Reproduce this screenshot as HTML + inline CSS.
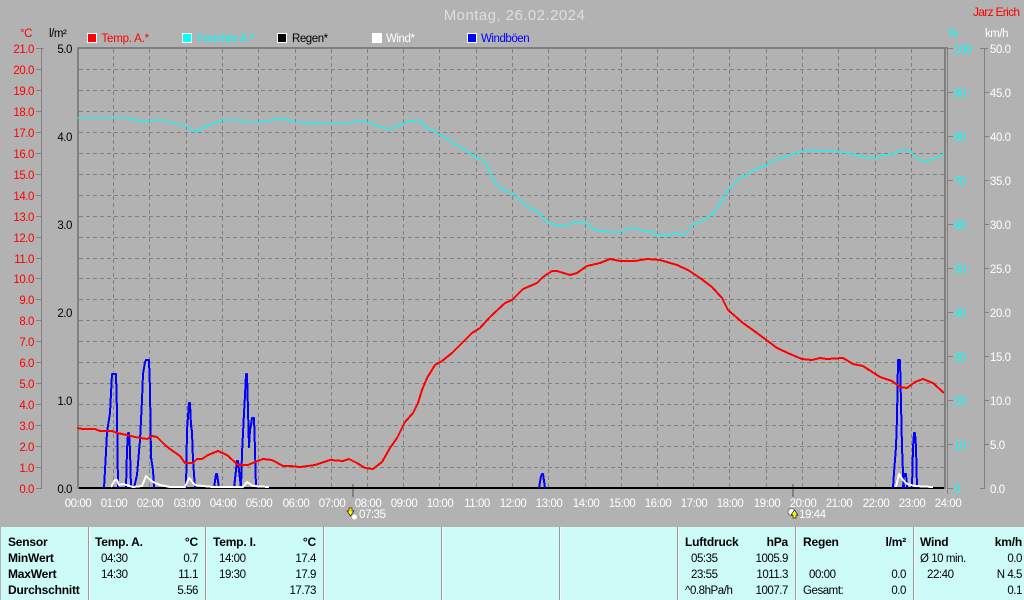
<!DOCTYPE html>
<html lang="de">
<head>
<meta charset="utf-8">
<title>Montag, 26.02.2024</title>
<style>
html,body{margin:0;padding:0;background:#b2b2b2;width:1024px;height:600px;overflow:hidden}
svg{display:block;position:absolute;left:0;top:0}
text{font-family:"Liberation Sans",sans-serif;font-size:11.5px;letter-spacing:-.45px}
.r{fill:#f00}.k{fill:#000}.c{fill:#0ff}.w{fill:#fff}
.e{text-anchor:end}.m{text-anchor:middle}
.b{font-weight:bold;font-size:12px;letter-spacing:-.2px}
.g{stroke:#808080;stroke-width:1;stroke-dasharray:4 3;fill:none}
.l{fill:none;stroke-linejoin:round}
</style>
</head>
<body>
<svg width="1024" height="600" viewBox="0 0 1024 600" xmlns="http://www.w3.org/2000/svg">
<rect width="1024" height="600" fill="#b2b2b2"/>

<text x="514.5" y="20" class="m" style="font-size:15px;letter-spacing:.45px;fill:#dedede">Montag, 26.02.2024</text>
<text x="973" y="16" class="r" style="font-size:12px;letter-spacing:-.7px">Jarz Erich</text>

<text x="20" y="37" class="r">°C</text>
<text x="49" y="37" class="k">l/m²</text>
<text x="948" y="37" class="c">%</text>
<text x="985" y="37" class="w">km/h</text>

<!-- legend -->
<g stroke="#fff" stroke-width="1" shape-rendering="crispEdges">
<rect x="87.5" y="33.5" width="9" height="9" fill="#f00"/>
<rect x="182.5" y="33.5" width="9" height="9" fill="#0ff"/>
<rect x="277.5" y="33.5" width="9" height="9" fill="#000"/>
<rect x="372.5" y="33.5" width="9" height="9" fill="#fff"/>
<rect x="467.5" y="33.5" width="9" height="9" fill="#00f"/>
</g>
<text x="101.5" y="42" class="r" style="letter-spacing:-.2px">Temp. A.*</text>
<text x="197" y="42" class="c" style="letter-spacing:-.2px">Feuchte A.*</text>
<text x="292" y="42" class="k">Regen*</text>
<text x="386" y="42" class="w">Wind*</text>
<text x="481" y="42" style="fill:#00f">Windböen</text>

<!-- grid -->
<g class="g" shape-rendering="crispEdges">
<path d="M79 69.5H944M79 90.5H944M79 111.5H944M79 132.5H944M79 153.5H944M79 174.5H944M79 195.5H944M79 216.5H944M79 237.5H944M79 258.5H944M79 278.5H944M79 299.5H944M79 320.5H944M79 341.5H944M79 362.5H944M79 383.5H944M79 404.5H944M79 425.5H944M79 446.5H944M79 467.5H944"/>
<path d="M113.5 49V488M149.5 49V488M186.5 49V488M222.5 49V488M258.5 49V488M295.5 49V488M331.5 49V488M367.5 49V488M403.5 49V488M439.5 49V488M476.5 49V488M512.5 49V488M548.5 49V488M585.5 49V488M621.5 49V488M657.5 49V488M693.5 49V488M729.5 49V488M766.5 49V488M802.5 49V488M838.5 49V488M875.5 49V488M911.5 49V488"/>
</g>

<!-- axes -->
<g fill="#808080" shape-rendering="crispEdges">
<rect x="77" y="47" width="870" height="2"/>
<rect x="77" y="47" width="2" height="442"/>
<rect x="944" y="47" width="2" height="442"/>
<rect x="947" y="47" width="1" height="447"/>
<rect x="41" y="48" width="1" height="441"/>
<rect x="984" y="48" width="1" height="441"/>
<rect x="36" y="48" width="8" height="1"/>
<rect x="980" y="48" width="8" height="1"/>
<rect x="980" y="488" width="5" height="1"/>
<rect x="352" y="484" width="2" height="13"/>
<rect x="792" y="484" width="2" height="13"/>
</g>
<path stroke="#808080" fill="none" shape-rendering="crispEdges" d="M36 69.5h5M36 90.5h5M36 111.5h5M36 132.5h5M36 153.5h5M36 174.5h5M36 195.5h5M36 216.5h5M36 237.5h5M36 258.5h5M36 278.5h5M36 299.5h5M36 320.5h5M36 341.5h5M36 362.5h5M36 383.5h5M36 404.5h5M36 425.5h5M36 446.5h5M36 467.5h5M36 488.5h5"/>
<path stroke="#808080" fill="none" shape-rendering="crispEdges" d="M948 48.5h5M948 92.5h5M948 136.5h5M948 180.5h5M948 224.5h5M948 268.5h5M948 312.5h5M948 356.5h5M948 400.5h5M948 444.5h5M948 488.5h5"/>
<path stroke="#808080" fill="none" shape-rendering="crispEdges" d="M985 92.5h4M985 136.5h4M985 180.5h4M985 224.5h4M985 268.5h4M985 312.5h4M985 356.5h4M985 400.5h4M985 444.5h4"/>

<!-- temp axis -->
<g class="r">
<text x="34" y="53" class="e">21.0</text><text x="34" y="74" class="e">20.0</text><text x="34" y="95" class="e">19.0</text><text x="34" y="116" class="e">18.0</text><text x="34" y="137" class="e">17.0</text><text x="34" y="158" class="e">16.0</text><text x="34" y="179" class="e">15.0</text><text x="34" y="200" class="e">14.0</text><text x="34" y="221" class="e">13.0</text><text x="34" y="242" class="e">12.0</text><text x="34" y="263" class="e">11.0</text><text x="34" y="283" class="e">10.0</text><text x="34" y="304" class="e">9.0</text><text x="34" y="325" class="e">8.0</text><text x="34" y="346" class="e">7.0</text><text x="34" y="367" class="e">6.0</text><text x="34" y="388" class="e">5.0</text><text x="34" y="409" class="e">4.0</text><text x="34" y="430" class="e">3.0</text><text x="34" y="451" class="e">2.0</text><text x="34" y="472" class="e">1.0</text><text x="34" y="493" class="e">0.0</text>
</g>
<!-- rain axis -->
<g class="k">
<text x="72" y="53" class="e">5.0</text><text x="72" y="141" class="e">4.0</text><text x="72" y="229" class="e">3.0</text><text x="72" y="317" class="e">2.0</text><text x="72" y="405" class="e">1.0</text><text x="72" y="493" class="e">0.0</text>
</g>
<!-- humidity axis -->
<g class="c">
<text x="954" y="53">100</text><text x="954" y="97">90</text><text x="954" y="141">80</text><text x="954" y="185">70</text><text x="954" y="229">60</text><text x="954" y="273">50</text><text x="954" y="317">40</text><text x="954" y="361">30</text><text x="954" y="405">20</text><text x="954" y="449">10</text><text x="954" y="493">0</text>
</g>
<!-- wind axis -->
<g class="w">
<text x="990" y="53">50.0</text><text x="990" y="97">45.0</text><text x="990" y="141">40.0</text><text x="990" y="185">35.0</text><text x="990" y="229">30.0</text><text x="990" y="273">25.0</text><text x="990" y="317">20.0</text><text x="990" y="361">15.0</text><text x="990" y="405">10.0</text><text x="990" y="449">5.0</text><text x="990" y="493">0.0</text>
</g>
<!-- time axis -->
<g class="w">
<text x="78" y="507" class="m">00:00</text><text x="114" y="507" class="m">01:00</text><text x="150" y="507" class="m">02:00</text><text x="187" y="507" class="m">03:00</text><text x="223" y="507" class="m">04:00</text><text x="259" y="507" class="m">05:00</text><text x="296" y="507" class="m">06:00</text><text x="332" y="507" class="m">07:00</text><text x="368" y="507" class="m">08:00</text><text x="404" y="507" class="m">09:00</text><text x="440" y="507" class="m">10:00</text><text x="477" y="507" class="m">11:00</text><text x="513" y="507" class="m">12:00</text><text x="549" y="507" class="m">13:00</text><text x="586" y="507" class="m">14:00</text><text x="622" y="507" class="m">15:00</text><text x="658" y="507" class="m">16:00</text><text x="694" y="507" class="m">17:00</text><text x="730" y="507" class="m">18:00</text><text x="767" y="507" class="m">19:00</text><text x="803" y="507" class="m">20:00</text><text x="839" y="507" class="m">21:00</text><text x="876" y="507" class="m">22:00</text><text x="912" y="507" class="m">23:00</text><text x="948" y="507" class="m">24:00</text>
<text x="359" y="518">07:35</text>
<text x="799" y="518">19:44</text>
</g>

<!-- sunrise / sunset icons -->
<circle cx="354.5" cy="517" r="2.5" fill="#fff"/>
<path d="M349 508h3v3h2l-3.5 5-3.5-5h2z" fill="#ff0" stroke="#222" stroke-width=".7"/>
<circle cx="791.5" cy="512" r="3.5" fill="#fff" stroke="#334" stroke-width=".6"/>
<path d="M793 518h3v-3h2l-3.5-5-3.5 5h2z" fill="#ff0" stroke="#222" stroke-width=".7"/>

<!-- cyan humidity -->
<polyline class="l" stroke="#0ff" stroke-width="1.2" shape-rendering="crispEdges" points="77,118 128,118 143,122 157,120 165,120 177,124 183,124 195,132 207,126 222,120 240,120 245,122 260,122 270,120 287,119 293,122 302,122 310,124 318,123 352,123 355,121 368,122 380,127 390,129 403,124 408,121 420,120 428,129 434,130 438,134 450,140 453,143 467,151 472,155 483,161 487,165 492,178 497,185 505,191 513,193 520,200 528,207 540,213 543,218 553,225 567,226 572,223 585,222 588,226 598,231 610,232 620,232 630,228 637,228 640,230 650,231 655,235 667,236 675,233 683,235 693,225 712,215 720,204 728,190 738,180 743,177 753,170 767,165 773,161 787,156 798,152 810,150 840,152 857,155 868,158 877,158 882,155 893,154 902,150 910,150 913,155 922,161 930,160 942,155 944,153"/>

<!-- black rain baseline -->
<rect x="79" y="487" width="865" height="2" fill="#000"/>

<!-- blue gusts -->
<g class="l" stroke="#00f" stroke-width="2" shape-rendering="crispEdges">
<polyline points="104,488 106,452 107,432 110,413 112,374 116,374 117,412 118,488"/>
<polyline points="126,488 127,450 128,433 129,433 130,450 131,488"/>
<polyline points="134,488 137,475 140,440 142,400 143,374 145,362 146,360 149,360 150,390 151,457 153,470 154,488"/>
<polyline points="186,488 187,430 189,403 190,403 191,425 192,432 193,460 195,488"/>
<polyline points="214,488 216,474 217,474 219,488"/>
<polyline points="234,488 236,470 237,461 238,461 239,470 241,488 242,453 244,413 245,395 246,374 247,374 248,410 249,447 250,430 251,425 252,418 254,418 255,450 256,488"/>
<polyline points="539,488 541,476 542,474 543,474 545,488"/>
<polyline points="893,488 894,473 896,447 897,418 898,360 900,360 901,403 902,447 903,473 904,488"/>
<polyline points="903,488 904,474 906,474 907,488"/>
<polyline points="912,488 913,447 914,433 915,433 916,447 917,488"/>
</g>

<!-- white wind -->
<polyline class="l" stroke="#fff" stroke-width="2" shape-rendering="crispEdges" points="111,487 115,480 117,480 119,485 123,484 133,487 142,486 146,476 153,482 160,485 170,487 185,487 189,478 195,485 203,486 213,487 243,487 247,482 253,486 269,487"/>
<polyline class="l" stroke="#fff" stroke-width="2" shape-rendering="crispEdges" points="896,487 899,474 903,480 907,484 915,486 933,487"/>

<!-- red temperature -->
<polyline class="l" stroke="#f00" stroke-width="2" shape-rendering="crispEdges" points="77,428 83,429 95,429 100,431 112,431 117,433 127,435 135,437 147,439 152,436 157,437 165,445 170,449 180,456 185,463 193,463 197,459 202,459 208,455 218,451 227,455 238,465 248,465 255,462 263,459 272,460 283,466 290,466 300,467 315,465 330,460 343,461 349,459 357,463 365,468 373,469 382,462 390,448 397,438 405,422 413,413 418,403 422,390 427,378 435,365 442,361 452,353 462,343 472,333 480,328 490,317 505,303 512,300 523,289 537,283 543,277 552,271 557,271 570,275 577,273 587,266 600,263 610,259 620,261 635,261 647,259 660,260 677,265 688,270 700,278 712,287 722,298 728,310 743,323 757,333 777,348 790,354 802,359 812,360 820,358 827,359 843,358 853,364 863,366 880,377 892,381 900,387 907,388 915,382 923,379 933,383 944,393"/>

<!-- table -->
<rect x="1" y="527" width="1023" height="73" fill="#cdfbf8"/>
<g shape-rendering="crispEdges">
<path fill="#999" d="M88 527h1v73h-1zM205 527h1v73h-1zM323 527h1v73h-1zM441 527h1v73h-1zM559 527h1v73h-1zM677 527h1v73h-1zM795 527h1v73h-1zM913 527h1v73h-1z"/>
<path fill="#fff" d="M89 527h1v73h-1zM206 527h1v73h-1zM324 527h1v73h-1zM442 527h1v73h-1zM560 527h1v73h-1zM678 527h1v73h-1zM796 527h1v73h-1zM914 527h1v73h-1z"/>
</g>
<g class="k">
<text x="8" y="546" class="b">Sensor</text>
<text x="8" y="562" class="b">MinWert</text>
<text x="8" y="578" class="b">MaxWert</text>
<text x="8" y="594" class="b">Durchschnitt</text>

<text x="95" y="546" class="b">Temp. A.</text>
<text x="198" y="546" class="b e">°C</text>
<text x="101" y="562">04:30</text><text x="198" y="562" class="e">0.7</text>
<text x="101" y="578">14:30</text><text x="198" y="578" class="e">11.1</text>
<text x="198" y="594" class="e">5.56</text>

<text x="213" y="546" class="b">Temp. I.</text>
<text x="316" y="546" class="b e">°C</text>
<text x="219" y="562">14:00</text><text x="316" y="562" class="e">17.4</text>
<text x="219" y="578">19:30</text><text x="316" y="578" class="e">17.9</text>
<text x="316" y="594" class="e">17.73</text>

<text x="685" y="546" class="b">Luftdruck</text>
<text x="788" y="546" class="b e">hPa</text>
<text x="691" y="562">05:35</text><text x="788" y="562" class="e">1005.9</text>
<text x="691" y="578">23:55</text><text x="788" y="578" class="e">1011.3</text>
<text x="685" y="594">^0.8hPa/h</text><text x="788" y="594" class="e">1007.7</text>

<text x="803" y="546" class="b">Regen</text>
<text x="906" y="546" class="b e">l/m²</text>
<text x="809" y="578">00:00</text><text x="906" y="578" class="e">0.0</text>
<text x="803" y="594">Gesamt:</text><text x="906" y="594" class="e">0.0</text>

<text x="920" y="546" class="b">Wind</text>
<text x="1022" y="546" class="b e">km/h</text>
<text x="920" y="562">Ø 10 min.</text><text x="1022" y="562" class="e">0.0</text>
<text x="927" y="578">22:40</text><text x="1022" y="578" class="e">N 4.5</text>
<text x="1022" y="594" class="e">0.1</text>
</g>
</svg>
</body>
</html>
